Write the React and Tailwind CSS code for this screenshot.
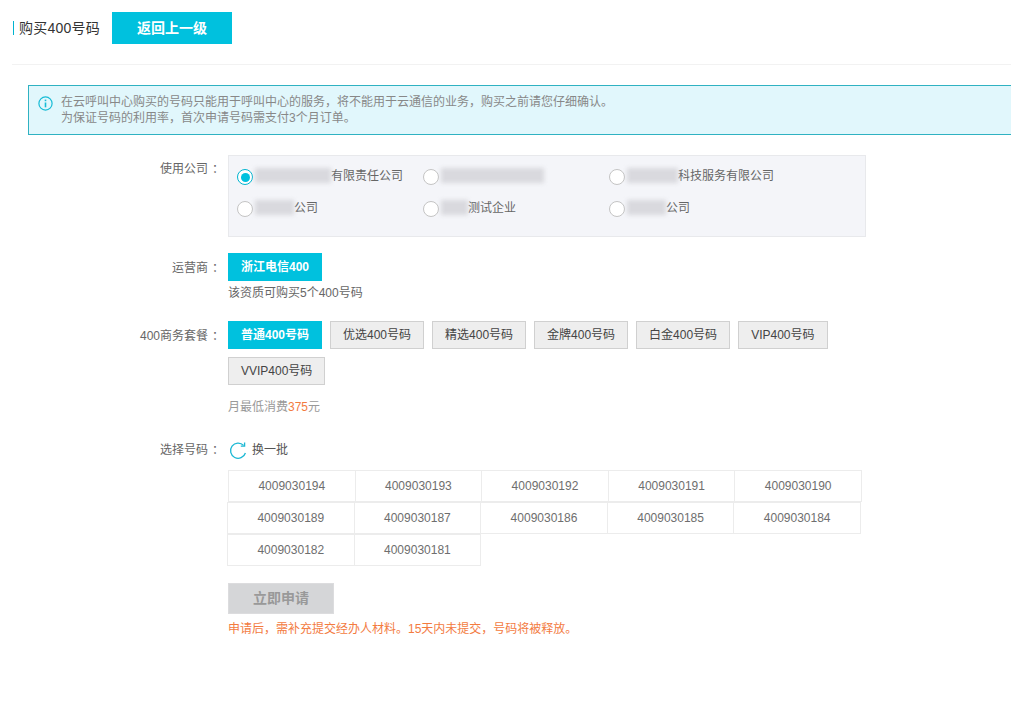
import React from 'react';

const companies = [
  { blurW: 'w-[76px]', text: '有限责任公司', active: true },
  { blurW: 'w-[103px]', text: '' },
  { blurW: 'w-[51px]', text: '科技服务有限公司' },
  { blurW: 'w-[39px]', text: '公司' },
  { blurW: 'w-[27px]', text: '测试企业' },
  { blurW: 'w-[39px]', text: '公司' },
];

const packages = ['普通400号码', '优选400号码', '精选400号码', '金牌400号码', '白金400号码', 'VIP400号码', 'VVIP400号码'];

const numberRows = [
  ['4009030194', '4009030193', '4009030192', '4009030191', '4009030190'],
  ['4009030189', '4009030187', '4009030186', '4009030185', '4009030184'],
  ['4009030182', '4009030181'],
];

function Label({ children }) {
  return (
    <div className="w-[228px] shrink-0 pr-[8px] text-right text-[12px] leading-[16px] text-[#666]">
      {children}<span className="inline-block translate-x-[4px]">：</span>
    </div>
  );
}

export default function App() {
  return (
    <div className="min-h-[702px] bg-white overflow-hidden font-['Liberation_Sans','Noto_Sans_CJK_SC',sans-serif] text-[12px] text-[#666]">
      {/* Header */}
      <div className="ml-[12px] h-[65px] border-b border-[#f2f2f2] flex items-start pt-[12px]">
        <div className="mt-[9px] ml-px w-px h-[14px] bg-[#00b4d0]" />
        <span className="ml-[5px] mt-[7px] text-[14px] leading-[18px] tracking-[0.25px] text-[#333]">购买400号码</span>
        <button className="ml-[12px] w-[120px] h-[32px] bg-[#00c1de] text-white text-[14px] font-bold">返回上一级</button>
      </div>

      {/* Notice */}
      <div className="mt-[20px] ml-[28px] w-[1000px] h-[50px] border border-[#2fb2c2] bg-[#e1f7fc] flex items-start pl-[9px] pt-[9px]">
        <svg className="mt-[1px] shrink-0" width="15" height="15" viewBox="0 0 15 15" fill="none" stroke="#17bcd6" strokeWidth="1.2">
          <circle cx="7.5" cy="7.5" r="6.6" />
          <path d="M7.5 6.5v4.8" strokeWidth="1.6" />
          <path d="M7.5 3.6v1.6" strokeWidth="1.6" />
        </svg>
        <div className="ml-[8px] text-[12px] leading-[15.5px] text-[#888]">
          <p>在云呼叫中心购买的号码只能用于呼叫中心的服务，将不能用于云通信的业务，购买之前请您仔细确认。</p>
          <p>为保证号码的利用率，首次申请号码需支付3个月订单。</p>
        </div>
      </div>

      {/* Company */}
      <div className="mt-[20px] flex">
        <div className="pt-[6px]"><Label>使用公司</Label></div>
        <div className="w-[638px] h-[82px] border border-[#e8e9ec] bg-[#f4f5f9] grid grid-cols-[186px_186px_1fr] auto-rows-[32px] pl-[8px] pt-[5px]">
          {companies.map((c, i) => (
            <div key={i} className="flex items-center h-[32px]">
              {c.active ? (
                <span className="w-[16px] h-[16px] rounded-full border border-[#00b4d0] bg-white flex items-center justify-center shrink-0">
                  <span className="w-[9px] h-[9px] rounded-full bg-[#00c1de]" />
                </span>
              ) : (
                <span className="w-[16px] h-[16px] rounded-full border border-[#c4c4c4] bg-white shrink-0" />
              )}
              <span className={`ml-[2px] mb-[3px] h-[15px] bg-[#d9d9de] blur-[2px] shrink-0 ${c.blurW}`} />
              <span className="mb-[3px] text-[12px] leading-[16px] text-[#666]">{c.text}</span>
            </div>
          ))}
        </div>
      </div>

      {/* Carrier */}
      <div className="mt-[16px] flex">
        <div className="pt-[7px]"><Label>运营商</Label></div>
        <div>
          <button className="w-[94px] h-[28px] bg-[#00c1de] text-white text-[12px] font-bold">浙江电信400</button>
          <p className="mt-[4px] leading-[16px] text-[#666]">该资质可购买5个400号码</p>
        </div>
      </div>

      {/* Packages */}
      <div className="mt-[20px] flex">
        <div className="pt-[7px]"><Label>400商务套餐</Label></div>
        <div className="w-[610px]">
          <div className="flex flex-wrap gap-x-[8px] gap-y-[8px]">
            {packages.map((p, i) => (
              <button
                key={p}
                className={i === 0
                  ? 'h-[28px] w-[94px] bg-[#00c1de] text-white text-[12px] font-bold'
                  : 'h-[28px] px-[12px] border border-[#d0d0d0] bg-[#eeeeee] text-[#444] text-[12px]'}
              >
                {p}
              </button>
            ))}
          </div>
          <p className="mt-[14px] leading-[16px] text-[#999]">月最低消费<span className="text-[#f37b3f]">375</span>元</p>
        </div>
      </div>

      {/* Numbers */}
      <div className="mt-[26px] flex">
        <div className="pt-[1px]"><Label>选择号码</Label></div>
        <div>
          <div className="h-[19px] flex items-center">
            <svg className="ml-[1px]" width="18" height="18" viewBox="0 0 18 18" fill="none" stroke="#1cb8d4" strokeWidth="1.3">
              <path d="M14.6 3.4A7.6 7.6 0 1 0 16.4 11" />
              <path d="M15.6 0.6v3.6h-3.8" />
            </svg>
            <span className="ml-[5px] mb-[1px] leading-[16px] text-[#555]">换一批</span>
          </div>
          <div className="mt-[10px]">
            {numberRows.map((row, r) => (
              <div key={r} className={r === 0 ? 'flex' : 'flex -ml-px'}>
                {row.map((n, i) => (
                  <div
                    key={n}
                    className={`w-[127.6px] h-[32px] border border-[#ececec] flex items-center justify-center text-[12px] text-[#6e6e6e] ${i > 0 ? '-ml-px' : ''}`}
                  >
                    {n}
                  </div>
                ))}
              </div>
            ))}
          </div>
          <button className="mt-[17px] block w-[106px] h-[31px] bg-[#d5d6d8] border border-[#dcdcde] text-[#999] text-[14px] font-bold">立即申请</button>
          <p className="mt-[7px] leading-[16px] text-[#f37b3f]">申请后，需补充提交经办人材料。15天内未提交，号码将被释放。</p>
        </div>
      </div>
    </div>
  );
}
